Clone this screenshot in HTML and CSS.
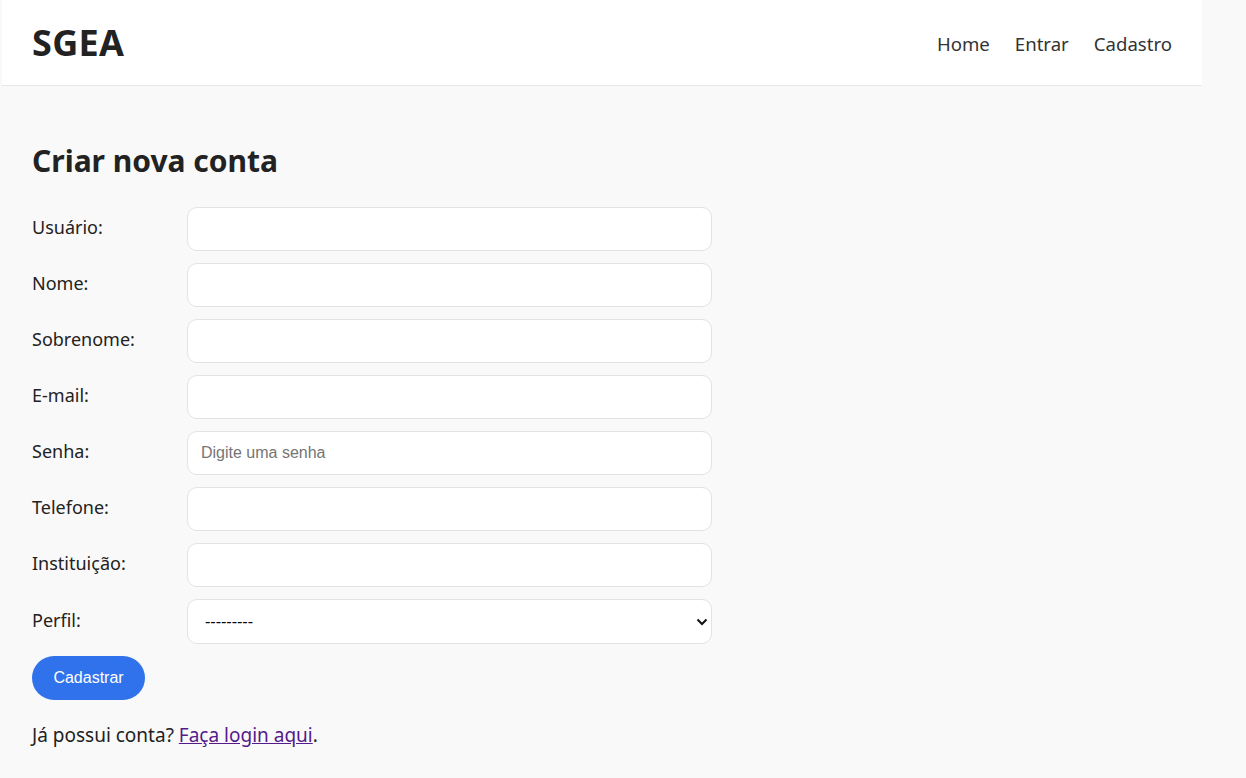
FILE: index.html
```html
<!DOCTYPE html>
<html lang="pt-BR">
<head>
<meta charset="utf-8">
<title>SGEA - Cadastro</title>
<link rel="stylesheet" href="styles.css">
</head>
<body>
<div class="page">
  <header class="topbar">
    <div class="brand">SGEA</div>
    <nav class="nav">
      <a href="#">Home</a>
      <a href="#">Entrar</a>
      <a href="#">Cadastro</a>
    </nav>
  </header>
  <main class="content">
    <h1 class="title">Criar nova conta</h1>
    <form class="form">
      <div class="row"><label for="u">Usuário:</label><input id="u" type="text"></div>
      <div class="row"><label for="n">Nome:</label><input id="n" type="text"></div>
      <div class="row"><label for="s">Sobrenome:</label><input id="s" type="text"></div>
      <div class="row"><label for="e">E-mail:</label><input id="e" type="email"></div>
      <div class="row"><label for="p">Senha:</label><input id="p" type="password" placeholder="Digite uma senha"></div>
      <div class="row"><label for="t">Telefone:</label><input id="t" type="text"></div>
      <div class="row"><label for="i">Instituição:</label><input id="i" type="text"></div>
      <div class="row"><label for="f">Perfil:</label>
        <div class="select-wrap">
          <select id="f"><option>---------</option></select>
          <svg class="chev" viewBox="0 0 12 8" width="12" height="8"><path d="M1.5 1.5 L6 6 L10.5 1.5" fill="none" stroke="#111" stroke-width="2"/></svg>
        </div>
      </div>
      <button type="button" class="btn">Cadastrar</button>
    </form>
    <p class="foot">Já possui conta? <a href="#" class="login">Faça login aqui</a>.</p>
  </main>
</div>
</body>
</html>
```
FILE: styles.css
```css
html, body {
  margin: 0;
  padding: 0;
  background: #f9f9f9;
}
body {
  font-family: "Noto Sans", "Open Sans", sans-serif;
  color: #222;
}
.page {
  width: 1200px;
  margin-left: 2px;
}
.topbar {
  height: 86px;
  box-sizing: border-box;
  background: #fff;
  border-bottom: 1px solid #e5e5e5;
  display: flex;
  align-items: center;
  justify-content: space-between;
  padding: 0 30px;
}
.brand {
  font-size: 36px;
  font-weight: 700;
  color: #222;
  letter-spacing: 0.3px;
}
.nav {
  display: flex;
  gap: 25px;
  padding-top: 2px;
}
.nav a {
  font-size: 18.6px;
  color: #333;
  text-decoration: none;
}
.content {
  padding: 40px 30px 0;
}
.title {
  font-size: 30px;
  font-weight: 700;
  margin: 14px 0 26px;
  color: #222;
}
.form {
  display: flex;
  flex-direction: column;
  gap: 12px;
  width: 680px;
}
.row {
  display: flex;
  align-items: center;
}
.row label {
  width: 155px;
  flex: none;
  font-size: 18px;
  padding-bottom: 4px;
}
.row input, .row select {
  box-sizing: border-box;
  width: 525px;
  height: 44px;
  background: #fff;
  border: 1px solid #e3e3e3;
  border-radius: 10px;
  padding: 0 13px;
  font-family: "Liberation Sans", Arial, sans-serif;
  font-size: 16px;
  color: #222;
  outline: none;
}
.row input::placeholder {
  color: #757575;
}
.select-wrap {
  position: relative;
  width: 525px;
}
.row select {
  appearance: none;
  height: 45px;
  padding-left: 17px;
  font-size: 16px;
  color: #000;
}
.chev {
  position: absolute;
  right: 4px;
  top: 19px;
  pointer-events: none;
}
.btn {
  align-self: flex-start;
  height: 44px;
  width: 113px;
  border: none;
  border-radius: 22px;
  background: #3072eb;
  color: #fff;
  font-family: "Liberation Sans", Arial, sans-serif;
  font-size: 16px;
}
.foot {
  margin: 22px 0 0;
  font-size: 19px;
}
.login {
  color: #551a8b;
}
```
